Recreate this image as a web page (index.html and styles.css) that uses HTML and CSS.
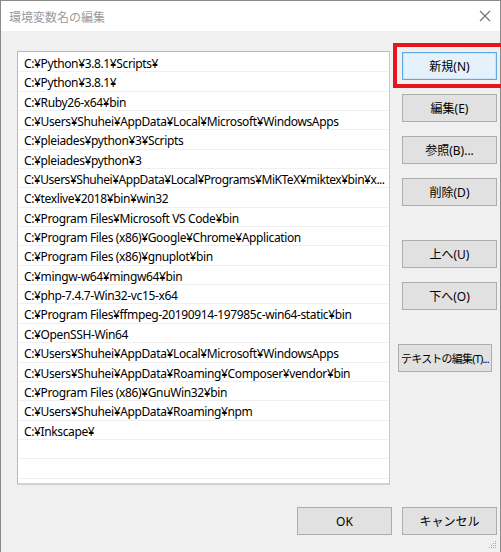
FILE: index.html
```html
<!DOCTYPE html>
<html>
<head>
<meta charset="utf-8" />
<title>環境変数名の編集</title>
<link rel="stylesheet" href="styles.css">
</head>
<body>
<div class="window">
	<div class="titlebar">
		<span class="title">環境変数名の編集</span>
		<svg class="close" width="12" height="12" viewBox="0 0 12 12"><path d="M1 1L11 11M11 1L1 11" stroke="#6f6f6f" stroke-width="1.1" fill="none"/></svg>
	</div>
	<div class="content">
		<div class="main">
			<ul class="pathlist">
				<li>C:¥Python¥3.8.1¥Scripts¥</li>
				<li>C:¥Python¥3.8.1¥</li>
				<li>C:¥Ruby26-x64¥bin</li>
				<li>C:¥Users¥Shuhei¥AppData¥Local¥Microsoft¥WindowsApps</li>
				<li>C:¥pleiades¥python¥3¥Scripts</li>
				<li>C:¥pleiades¥python¥3</li>
				<li class="long">C:¥Users¥Shuhei¥AppData¥Local¥Programs¥MiKTeX¥miktex¥bin¥x...</li>
				<li>C:¥texlive¥2018¥bin¥win32</li>
				<li>C:¥Program Files¥Microsoft VS Code¥bin</li>
				<li>C:¥Program Files (x86)¥Google¥Chrome¥Application</li>
				<li>C:¥Program Files (x86)¥gnuplot¥bin</li>
				<li>C:¥mingw-w64¥mingw64¥bin</li>
				<li>C:¥php-7.4.7-Win32-vc15-x64</li>
				<li>C:¥Program Files¥ffmpeg-20190914-197985c-win64-static¥bin</li>
				<li>C:¥OpenSSH-Win64</li>
				<li>C:¥Users¥Shuhei¥AppData¥Local¥Microsoft¥WindowsApps</li>
				<li>C:¥Users¥Shuhei¥AppData¥Roaming¥Composer¥vendor¥bin</li>
				<li>C:¥Program Files (x86)¥GnuWin32¥bin</li>
				<li>C:¥Users¥Shuhei¥AppData¥Roaming¥npm</li>
				<li>C:¥Inkscape¥</li>
				<li></li>
				<li></li>
				<li></li>
			</ul>
			<div class="side">
				<div class="mark"><button class="btn focus">新規(N)</button></div>
				<button class="btn">編集(E)</button>
				<button class="btn">参照(B)...</button>
				<button class="btn">削除(D)</button>
				<button class="btn gap">上へ(U)</button>
				<button class="btn">下へ(O)</button>
				<button class="btn gap text">テキストの編集(T)...</button>
			</div>
		</div>
		<div class="footer">
			<button class="btn">OK</button>
			<button class="btn">キャンセル</button>
		</div>
		<svg class="grip" width="8" height="8" viewBox="0 0 8 8" fill="#a8a8a8">
			<rect x="6" y="0" width="1" height="1"/>
			<rect x="4" y="2" width="1" height="1"/><rect x="6" y="2" width="1" height="1"/>
			<rect x="2" y="4" width="1" height="1"/><rect x="4" y="4" width="1" height="1"/><rect x="6" y="4" width="1" height="1"/>
			<rect x="0" y="6" width="1" height="1"/><rect x="2" y="6" width="1" height="1"/><rect x="4" y="6" width="1" height="1"/><rect x="6" y="6" width="1" height="1"/>
		</svg>
	</div>
</div>
</body>
</html>
```

FILE: styles.css
```css
body,ul{margin:0;padding:0;}
body{font-family:"Noto Sans","Noto Sans CJK JP",sans-serif;font-size:12px;color:#000;background:#fff;}
.window{width:501px;height:552px;box-sizing:border-box;border:1px solid #8a8a8a;border-bottom:none;display:flex;flex-direction:column;}
.titlebar{height:30px;background:#fff;display:flex;align-items:center;justify-content:space-between;padding:0 9px 0 8px;flex-shrink:0;}
.title{color:#9b9b9b;font-size:12px;font-family:"Noto Sans CJK JP",sans-serif;}
.close{display:block;}
.content{flex:1;background:#f0f0f0;padding:20px 0 0 16px;position:relative;}
.main{display:flex;}
.pathlist{width:373px;height:434px;box-sizing:border-box;background:#fff;border:1px solid #b9b9b9;border-bottom:2px solid #d2d2d2;border-right-color:#c8c8c8;padding-top:1px;overflow:hidden;list-style:none;}
.pathlist li{height:19.35px;box-sizing:border-box;border-bottom:1px solid #f0f0f0;line-height:21px;padding-left:6px;white-space:nowrap;overflow:hidden;letter-spacing:-0.37px;}
.pathlist li.long{letter-spacing:-0.47px;}
.side{display:flex;flex-direction:column;gap:14px;margin-left:12px;padding-top:1px;}
.btn{display:block;width:95px;height:28px;box-sizing:border-box;background:#e1e1e1;border:1px solid #adadad;font-family:"Noto Sans","Noto Sans CJK JP",sans-serif;font-size:12px;color:#000;padding:0;}
.btn.focus{background:#e5f1fb;border:1px solid #5fa8e6;box-shadow:inset 0 0 0 1px #cde4f7;}
.mark{position:relative;}
.mark::after{content:"";position:absolute;left:-9px;top:-9px;right:-8px;bottom:-8px;border:4px solid #e8141c;}
.btn.gap{margin-top:20px;}
.btn.text{margin-left:-4px;width:94px;white-space:nowrap;font-size:11px;letter-spacing:-0.8px;}
.footer{display:flex;gap:10px;margin:22px 0 0 280px;}
.grip{position:absolute;right:3px;bottom:3px;}
```
